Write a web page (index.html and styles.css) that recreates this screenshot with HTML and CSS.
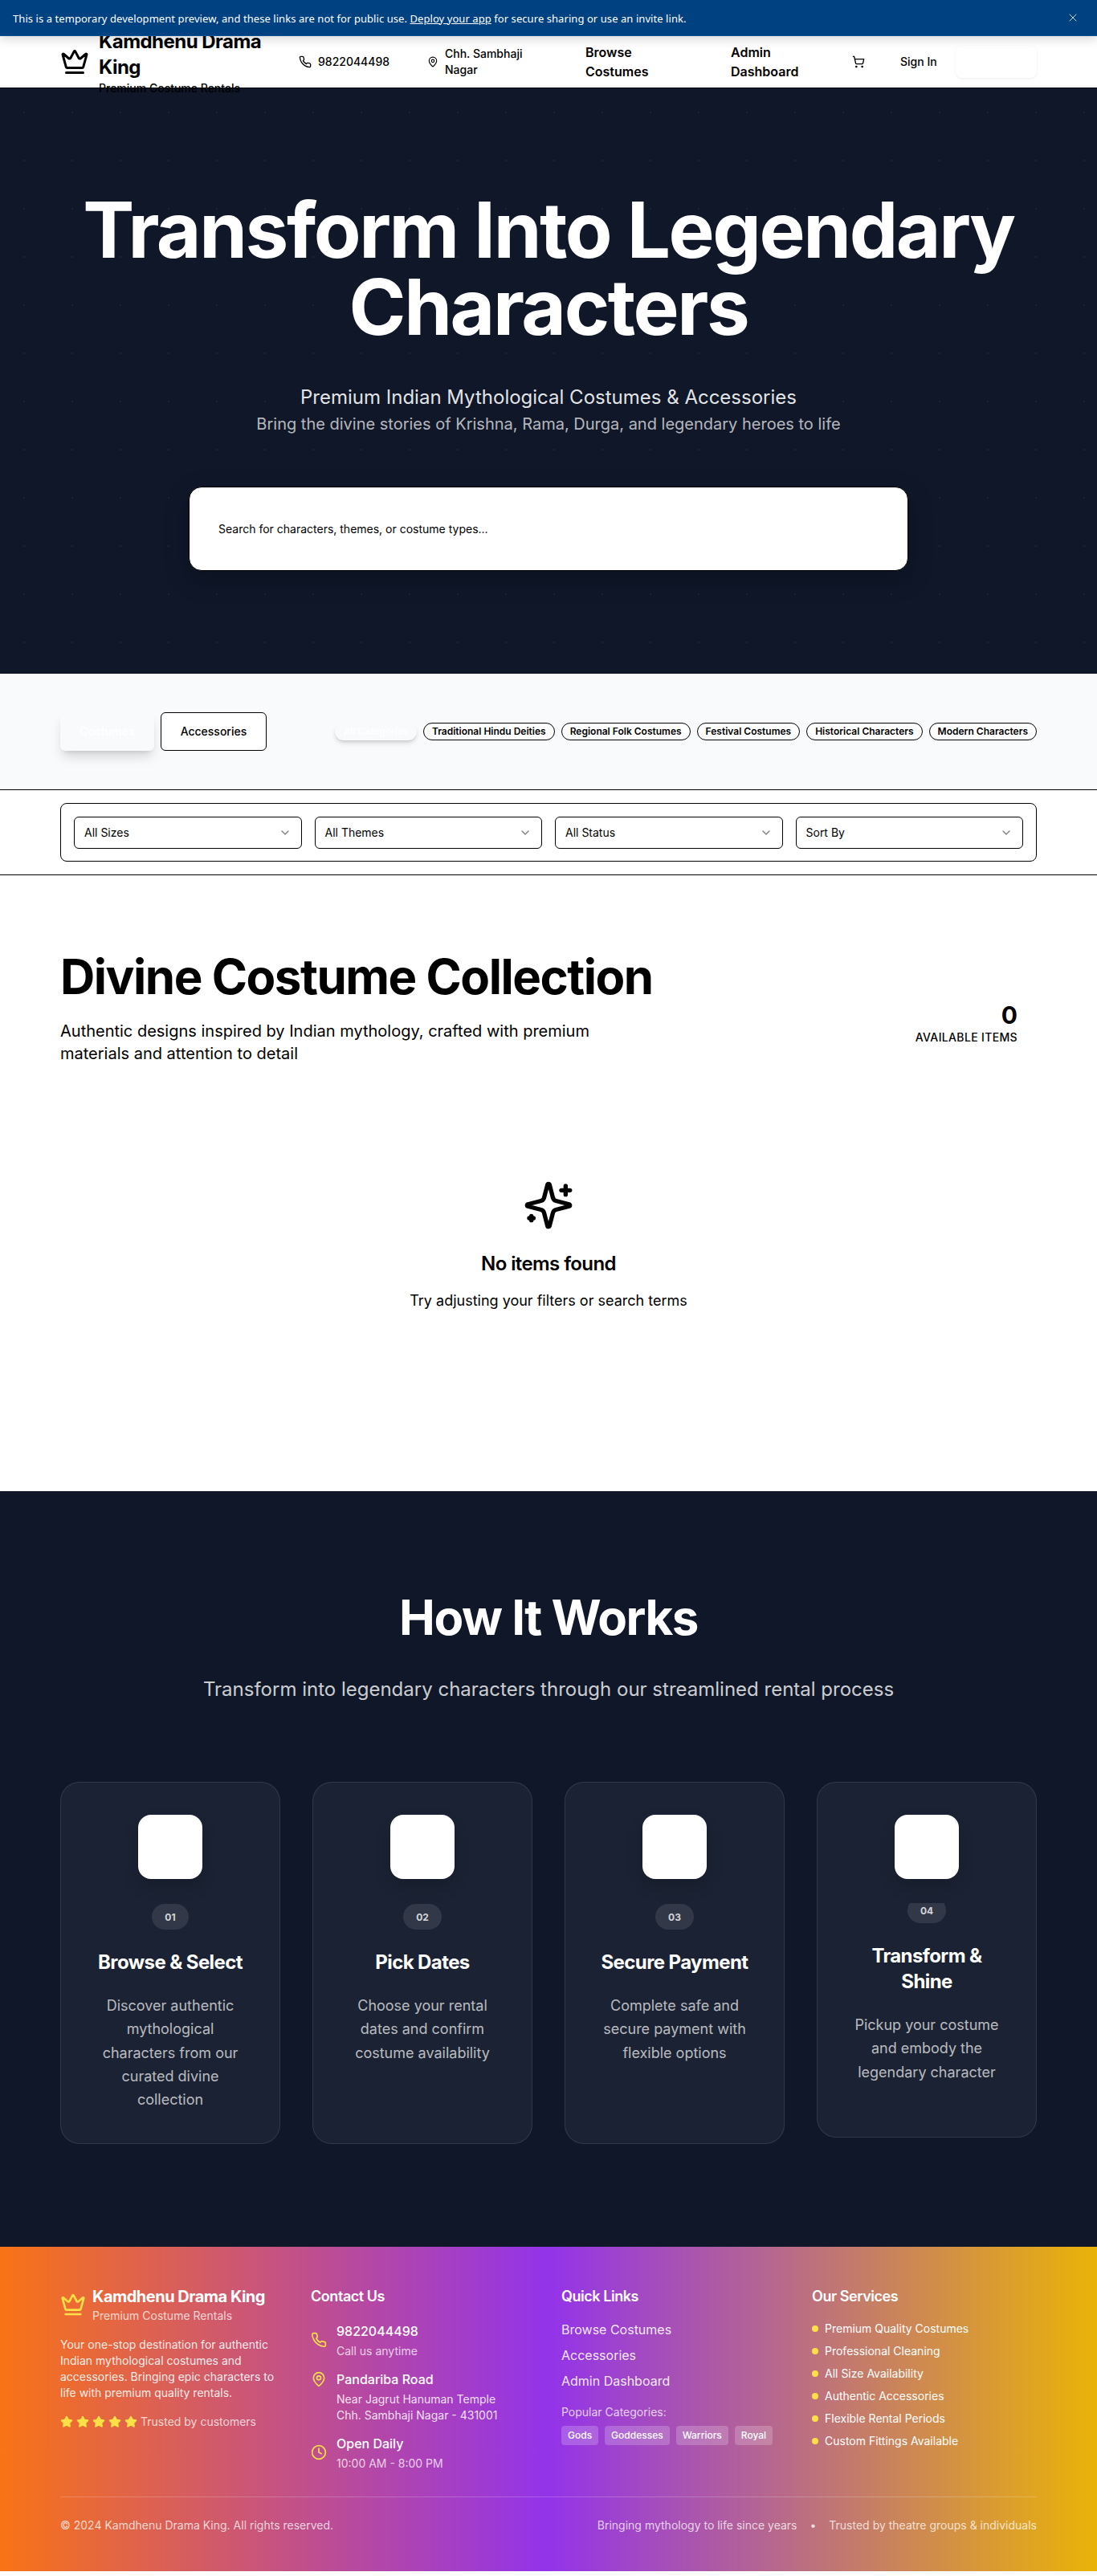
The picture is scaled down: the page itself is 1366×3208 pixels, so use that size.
FILE: index.html
```html
<!DOCTYPE html>
<html lang="en">
<head>
<meta charset="utf-8">
<title>Kamdhenu Drama King</title>
<link rel="stylesheet" href="styles.css">
</head>
<body>
<svg class="sprite" aria-hidden="true">
  <symbol id="crown" viewBox="0 0 24 24"><path d="M11.562 3.266a.5.5 0 0 1 .876 0L15.39 8.87a1 1 0 0 0 1.516.294L21.183 5.5a.5.5 0 0 1 .798.519l-2.834 10.246a1 1 0 0 1-.956.734H5.81a1 1 0 0 1-.957-.734L2.02 6.02a.5.5 0 0 1 .798-.519l4.276 3.664a1 1 0 0 0 1.516-.294z"/><path d="M5 21h14"/></symbol>
  <symbol id="phone" viewBox="0 0 24 24"><path d="M22 16.92v3a2 2 0 0 1-2.18 2 19.79 19.79 0 0 1-8.63-3.07 19.5 19.5 0 0 1-6-6 19.79 19.79 0 0 1-3.07-8.67A2 2 0 0 1 4.11 2h3a2 2 0 0 1 2 1.72 12.84 12.84 0 0 0 .7 2.81 2 2 0 0 1-.45 2.11L8.09 9.91a16 16 0 0 0 6 6l1.27-1.27a2 2 0 0 1 2.11-.45 12.84 12.84 0 0 0 2.81.7A2 2 0 0 1 22 16.92z"/></symbol>
  <symbol id="pin" viewBox="0 0 24 24"><path d="M20 10c0 4.993-5.539 10.193-7.399 11.799a1 1 0 0 1-1.202 0C9.539 20.193 4 14.993 4 10a8 8 0 0 1 16 0"/><circle cx="12" cy="10" r="3"/></symbol>
  <symbol id="cart" viewBox="0 0 24 24"><circle cx="8" cy="21" r="1"/><circle cx="19" cy="21" r="1"/><path d="M2.05 2.05h2l2.66 12.42a2 2 0 0 0 2 1.58h9.78a2 2 0 0 0 1.95-1.57l1.65-7.43H5.12"/></symbol>
  <symbol id="chevron" viewBox="0 0 24 24"><path d="m6 9 6 6 6-6"/></symbol>
  <symbol id="clock" viewBox="0 0 24 24"><circle cx="12" cy="12" r="10"/><path d="M12 6v6l4 2"/></symbol>
  <symbol id="close" viewBox="0 0 24 24"><path d="M18 6 6 18M6 6l12 12"/></symbol>
  <symbol id="sparkles" viewBox="0 0 24 24"><path d="M9.937 15.5A2 2 0 0 0 8.5 14.063l-6.135-1.582a.5.5 0 0 1 0-.962L8.5 9.936A2 2 0 0 0 9.937 8.5l1.582-6.135a.5.5 0 0 1 .963 0L14.063 8.5A2 2 0 0 0 15.5 9.937l6.135 1.581a.5.5 0 0 1 0 .964L15.5 14.063a2 2 0 0 0-1.437 1.437l-1.582 6.135a.5.5 0 0 1-.963 0z"/><path d="M20 3v4"/><path d="M22 5h-4"/><path d="M4 17v2"/><path d="M5 18H3"/></symbol>
  <symbol id="star" viewBox="0 0 24 24"><path d="M11.525 2.295a.53.53 0 0 1 .95 0l2.31 4.679a2.123 2.123 0 0 0 1.595 1.16l5.166.756a.53.53 0 0 1 .294.904l-3.736 3.638a2.123 2.123 0 0 0-.611 1.878l.882 5.14a.53.53 0 0 1-.771.56l-4.618-2.428a2.122 2.122 0 0 0-1.973 0L6.396 21.01a.53.53 0 0 1-.77-.56l.881-5.139a2.122 2.122 0 0 0-.611-1.879L2.16 9.795a.53.53 0 0 1 .294-.906l5.165-.755a2.122 2.122 0 0 0 1.597-1.16z"/></symbol>
</svg>

<div class="banner">
  <span>This is a temporary development preview, and these links are not for public use. <a href="#">Deploy your app</a> for secure sharing or use an invite link.</span>
  <svg class="icon banner-close"><use href="#close"/></svg>
</div>

<header class="header">
  <div class="container header-row">
    <div class="brand">
      <svg class="icon brand-icon"><use href="#crown"/></svg>
      <div class="brand-text">
        <div class="brand-name">Kamdhenu Drama King</div>
        <div class="brand-sub">Premium Costume Rentals</div>
      </div>
    </div>
    <div class="header-phone"><svg class="icon icon-16"><use href="#phone"/></svg><span>9822044498</span></div>
    <div class="header-place"><svg class="icon icon-14"><use href="#pin"/></svg><span>Chh. Sambhaji Nagar</span></div>
    <a class="nav-link nav-browse" href="#">Browse Costumes</a>
    <a class="nav-link nav-admin" href="#">Admin Dashboard</a>
    <svg class="icon icon-16 nav-cart"><use href="#cart"/></svg>
    <a class="nav-sign" href="#">Sign In</a>
    <span class="nav-button"></span>
  </div>
</header>

<section class="hero">
  <h1>Transform Into Legendary Characters</h1>
  <p class="hero-sub">Premium Indian Mythological Costumes &amp; Accessories<br><span>Bring the divine stories of Krishna, Rama, Durga, and legendary heroes to life</span></p>
  <div class="search">Search for characters, themes, or costume types...</div>
</section>

<section class="tabs">
  <div class="container tabs-row">
    <div class="tab-group">
      <span class="tab tab-active">Costumes</span>
      <span class="tab">Accessories</span>
    </div>
    <div class="chips">
      <span class="chip chip-active">All Categories</span>
      <span class="chip">Traditional Hindu Deities</span>
      <span class="chip">Regional Folk Costumes</span>
      <span class="chip">Festival Costumes</span>
      <span class="chip">Historical Characters</span>
      <span class="chip">Modern Characters</span>
    </div>
  </div>
</section>

<section class="filters">
  <div class="container">
    <div class="filter-box">
      <div class="select">All Sizes<svg class="icon icon-16"><use href="#chevron"/></svg></div>
      <div class="select">All Themes<svg class="icon icon-16"><use href="#chevron"/></svg></div>
      <div class="select">All Status<svg class="icon icon-16"><use href="#chevron"/></svg></div>
      <div class="select">Sort By<svg class="icon icon-16"><use href="#chevron"/></svg></div>
    </div>
  </div>
</section>

<main class="collection">
  <div class="container">
    <div class="collection-head">
      <div class="collection-intro">
        <h2>Divine Costume Collection</h2>
        <p>Authentic designs inspired by Indian mythology, crafted with premium materials and attention to detail</p>
      </div>
      <div class="count">
        <div class="count-number">0</div>
        <div class="count-label">Available Items</div>
      </div>
    </div>
    <div class="empty">
      <svg class="icon empty-icon"><use href="#sparkles"/></svg>
      <h3>No items found</h3>
      <p>Try adjusting your filters or search terms</p>
    </div>
  </div>
</main>

<section class="steps">
  <div class="container">
    <h2>How It Works</h2>
    <p class="steps-sub">Transform into legendary characters through our streamlined rental process</p>
    <div class="cards">
      <div class="card"><div class="card-icon"></div><span class="card-num">01</span><h3>Browse &amp; Select</h3><p>Discover authentic mythological characters from our curated divine collection</p></div>
      <div class="card"><div class="card-icon"></div><span class="card-num">02</span><h3>Pick Dates</h3><p>Choose your rental dates and confirm costume availability</p></div>
      <div class="card"><div class="card-icon"></div><span class="card-num">03</span><h3>Secure Payment</h3><p>Complete safe and secure payment with flexible options</p></div>
      <div class="card card-raised"><div class="card-icon"></div><span class="card-num">04</span><h3>Transform &amp; Shine</h3><p>Pickup your costume and embody the legendary character</p></div>
    </div>
  </div>
</section>

<footer class="footer">
  <div class="container">
    <div class="footer-grid">
      <div>
        <div class="footer-brand">
          <svg class="icon footer-crown"><use href="#crown"/></svg>
          <div><div class="footer-name">Kamdhenu Drama King</div><div class="footer-tag">Premium Costume Rentals</div></div>
        </div>
        <p class="footer-about">Your one-stop destination for authentic Indian mythological costumes and accessories. Bringing epic characters to life with premium quality rentals.</p>
        <div class="stars">
          <svg class="icon star"><use href="#star"/></svg><svg class="icon star"><use href="#star"/></svg><svg class="icon star"><use href="#star"/></svg><svg class="icon star"><use href="#star"/></svg><svg class="icon star"><use href="#star"/></svg>
          <span>Trusted by customers</span>
        </div>
      </div>
      <div>
        <h4>Contact Us</h4>
        <div class="contacts">
          <div class="contact"><svg class="icon icon-20"><use href="#phone"/></svg><div><div class="contact-title">9822044498</div><div class="contact-note">Call us anytime</div></div></div>
          <div class="contact contact-top"><svg class="icon icon-20"><use href="#pin"/></svg><div><div class="contact-title">Pandariba Road</div><div class="contact-address">Near Jagrut Hanuman Temple<br>Chh. Sambhaji Nagar - 431001</div></div></div>
          <div class="contact"><svg class="icon icon-20"><use href="#clock"/></svg><div><div class="contact-title">Open Daily</div><div class="contact-note">10:00 AM - 8:00 PM</div></div></div>
        </div>
      </div>
      <div>
        <h4>Quick Links</h4>
        <div class="links"><a href="#">Browse Costumes</a><a href="#">Accessories</a><a href="#">Admin Dashboard</a></div>
        <div class="popular">Popular Categories:</div>
        <div class="tags"><span>Gods</span><span>Goddesses</span><span>Warriors</span><span>Royal</span></div>
      </div>
      <div>
        <h4>Our Services</h4>
        <ul class="services">
          <li>Premium Quality Costumes</li>
          <li>Professional Cleaning</li>
          <li>All Size Availability</li>
          <li>Authentic Accessories</li>
          <li>Flexible Rental Periods</li>
          <li>Custom Fittings Available</li>
        </ul>
      </div>
    </div>
    <div class="footer-bottom">
      <span>© 2024 Kamdhenu Drama King. All rights reserved.</span>
      <div class="footer-notes"><span>Bringing mythology to life since years</span><span>•</span><span>Trusted by theatre groups &amp; individuals</span></div>
    </div>
  </div>
</footer>
</body>
</html>
```
FILE: styles.css
```css
* { box-sizing: border-box; margin: 0; padding: 0; }
body { background: #fff; color: #000; font-family: Inter, "Liberation Sans", sans-serif; font-size: 16px; line-height: 24px; }
a { color: inherit; text-decoration: none; }
ul { list-style: none; }
.sprite { display: none; }
.icon { fill: none; stroke: currentColor; stroke-width: 2; stroke-linecap: round; stroke-linejoin: round; flex: none; display: block; }
.icon-14 { width: 14px; height: 14px; }
.icon-16 { width: 16px; height: 16px; }
.icon-20 { width: 20px; height: 20px; }
.container { width: 1216px; margin: 0 auto; }

.banner { position: relative; z-index: 10; height: 45px; padding: 0 22px 0 16px; display: flex; align-items: center; justify-content: space-between; background: #004182; border-bottom: 1px solid #0f5391; color: #fff; font: 13px/20px "Noto Sans", sans-serif; letter-spacing: .065px; box-shadow: 0 4px 12px rgba(0,0,0,.15); }
.banner span { padding-top: 1px; }
.banner a { text-decoration: underline; }
.banner-close { width: 16px; height: 16px; stroke-width: 1.5; opacity: .8; }

.header { position: relative; z-index: 5; height: 65px; background: #fff; border-bottom: 1px solid #000; }
.header-row { height: 64px; display: flex; align-items: center; font-size: 14px; line-height: 20px; font-weight: 500; }
.brand { width: 297px; display: flex; align-items: center; gap: 12px; }
.brand-icon { width: 36px; height: 36px; }
.brand-text { width: 214px; padding-top: 1px; }
.brand-name { font-size: 24px; line-height: 32px; font-weight: 700; letter-spacing: -.022em; }
.brand-sub { font-size: 14px; line-height: 20px; }
.header-phone { width: 160px; display: flex; align-items: center; gap: 8px; }
.header-place { width: 197px; display: flex; align-items: center; gap: 8px; }
.header-place span { width: 110px; }
.nav-link { font-size: 16px; line-height: 24px; font-weight: 600; }
.nav-browse { width: 90px; margin-right: 91px; }
.nav-admin { width: 96px; margin-right: 55px; }
.nav-cart { margin-right: 44px; }
.nav-sign { width: 69px; }
.nav-button { width: 101px; height: 40px; border-radius: 8px; background: #fff; box-shadow: 0 1px 3px rgba(0,0,0,.08); }

.hero { height: 729px; padding: 128px 75px 0; color: #fff; text-align: center; background: radial-gradient(circle at 30px 30px, rgba(156,146,172,.1) 1px, transparent 1.5px) 0 0 / 60px 60px #0f1729; }
.hero h1 { font-size: 96px; line-height: 96px; font-weight: 700; letter-spacing: -.025em; }
.hero-sub { height: 63px; margin-top: 49px; font-size: 24px; line-height: 32px; color: rgba(255,255,255,.9); }
.hero-sub span { font-size: 20px; color: rgba(255,255,255,.7); }
.search { width: 896px; height: 105px; margin: 64px auto 0; padding: 0 36px; display: flex; align-items: center; background: #fff; border: 1px solid #000; border-radius: 16px; color: #000; font-size: 14px; box-shadow: 0 10px 30px rgba(0,0,0,.25); }

.tabs { height: 144px; padding-top: 48px; background: #f9fafc; }
.tabs-row { display: flex; align-items: center; justify-content: space-between; }
.tab-group, .chips { display: flex; gap: 8px; }
.tab { height: 48px; padding: 0 24px; border: 1px solid #000; border-radius: 6px; background: #fff; font-size: 14px; line-height: 46px; font-weight: 500; }
.tab-active { border: 0; background: #f9fafc; color: #fff; font-weight: 600; line-height: 48px; box-shadow: 0 10px 15px -3px rgba(0,0,0,.15), 0 4px 6px -4px rgba(0,0,0,.15); }
.chip { height: 22px; padding: 0 10px; border: 1px solid #000; border-radius: 11px; background: #fff; font-size: 12px; line-height: 20px; font-weight: 600; white-space: nowrap; }
.chip-active { padding: 0 9px; border-color: transparent; background: #f9fafc; color: #fff; box-shadow: 0 4px 6px -1px rgba(0,0,0,.15), 0 2px 4px -2px rgba(0,0,0,.15); }

.filters { height: 107px; padding: 16px 0; border: solid #000; border-width: 1px 0; background: #fff; }
.filter-box { height: 73px; padding: 16px; display: grid; grid-template-columns: repeat(4, 1fr); gap: 16px; border: 1px solid #000; border-radius: 8px; }
.select { height: 40px; padding: 0 12px; display: flex; align-items: center; justify-content: space-between; border: 1px solid #000; border-radius: 6px; font-size: 14px; }
.select .icon { opacity: .5; }

.collection { height: 767px; padding-top: 96px; }
.collection-head { height: 140px; display: flex; align-items: flex-end; justify-content: space-between; }
.collection-intro { width: 738px; }
.collection-intro h2, .steps h2 { font-size: 60px; line-height: 60px; font-weight: 700; letter-spacing: -.025em; }
.collection-intro p { width: 672px; margin-top: 24px; font-size: 20px; line-height: 28px; }
.count { padding: 24px; text-align: right; }
.count-number { font-size: 30px; line-height: 36px; font-weight: 700; }
.count-label { font-size: 14px; line-height: 20px; font-weight: 500; letter-spacing: .025em; text-transform: uppercase; }
.empty { padding-top: 143px; display: flex; flex-direction: column; align-items: center; }
.empty-icon { width: 64px; height: 64px; }
.empty h3 { margin-top: 25px; font-size: 24px; line-height: 32px; font-weight: 600; letter-spacing: -.025em; }
.empty p { margin-top: 16px; font-size: 18px; line-height: 28px; }

.steps { height: 941px; padding-top: 127px; background: #0f1729; color: #fff; text-align: center; }
.steps-sub { margin-top: 40px; font-size: 24px; line-height: 39px; color: rgba(255,255,255,.8); }
.cards { margin-top: 96px; display: grid; grid-template-columns: repeat(4, 1fr); gap: 40px; align-items: start; }
.card { height: 451px; padding: 40px; display: flex; flex-direction: column; align-items: center; border: 1px solid rgba(255,255,255,.1); border-radius: 24px; background: rgba(255,255,255,.05); }
.card-icon { width: 80px; height: 80px; flex: none; border-radius: 16px; background: #fff; box-shadow: 0 10px 20px rgba(0,0,0,.15); }
.card-num { height: 32px; margin-top: 31px; padding: 0 16px; border-radius: 16px; background: rgba(255,255,255,.1); color: rgba(255,255,255,.8); font-size: 12px; line-height: 33px; font-weight: 700; }
.card h3 { margin-top: 25px; font-size: 24px; line-height: 32px; font-weight: 700; letter-spacing: -.025em; }
.card p { margin-top: 23px; font-size: 18px; line-height: 29.25px; color: rgba(255,255,255,.7); }
.card-raised { height: 443px; }
.card-raised .card-num { margin-top: 23px; clip-path: inset(7px 0 0 0); }

.footer { height: 404px; padding-top: 48px; color: #fff; background: linear-gradient(to right, #f97316, #9333ea, #eab308); font-size: 14px; line-height: 20px; }
.footer-grid { height: 232px; display: grid; grid-template-columns: repeat(4, 1fr); gap: 32px; }
.footer-brand { display: flex; align-items: center; gap: 8px; }
.footer-crown { width: 32px; height: 32px; color: #fde047; }
.footer-name { font-size: 20px; line-height: 28px; font-weight: 700; letter-spacing: -.025em; }
.footer-tag, .contact-note, .popular { color: rgba(255,255,255,.75); }
.footer-about { margin-top: 16px; color: rgba(255,255,255,.9); }
.stars { margin-top: 16px; display: flex; align-items: center; gap: 4px; color: rgba(255,255,255,.75); }
.star { width: 16px; height: 16px; color: #fde047; fill: #fde047; }
.footer h4 { margin-bottom: 16px; font-size: 18px; line-height: 28px; font-weight: 600; letter-spacing: -.025em; }
.contacts { display: flex; flex-direction: column; gap: 12px; }
.contact { display: flex; align-items: center; gap: 12px; }
.contact .icon { margin-top: -1px; color: #fde047; }
.contact-top { align-items: flex-start; }
.contact-top .icon { margin-top: 3px; }
.contact-title { padding-top: 1px; margin-bottom: 3px; font-size: 16px; line-height: 24px; font-weight: 500; }
.contact-address { color: rgba(255,255,255,.85); }
.links { margin-top: -1px; display: flex; flex-direction: column; gap: 8px; font-size: 16px; line-height: 24px; color: rgba(255,255,255,.9); }
.popular { margin-top: 17px; }
.tags { margin-top: 7px; display: flex; gap: 8px; }
.tags span { padding: 4px 8px; border-radius: 4px; background: rgba(255,255,255,.2); font-size: 12px; line-height: 16px; font-weight: 500; }
.services { display: flex; flex-direction: column; gap: 8px; }
.services li { display: flex; align-items: center; gap: 8px; }
.services li::before { content: ""; width: 8px; height: 8px; border-radius: 50%; background: #fde047; }
.footer-bottom { margin-top: 31px; padding-top: 25px; display: flex; justify-content: space-between; border-top: 1px solid rgba(255,255,255,.2); color: rgba(255,255,255,.75); }
.footer-notes { display: flex; gap: 16px; }
```
